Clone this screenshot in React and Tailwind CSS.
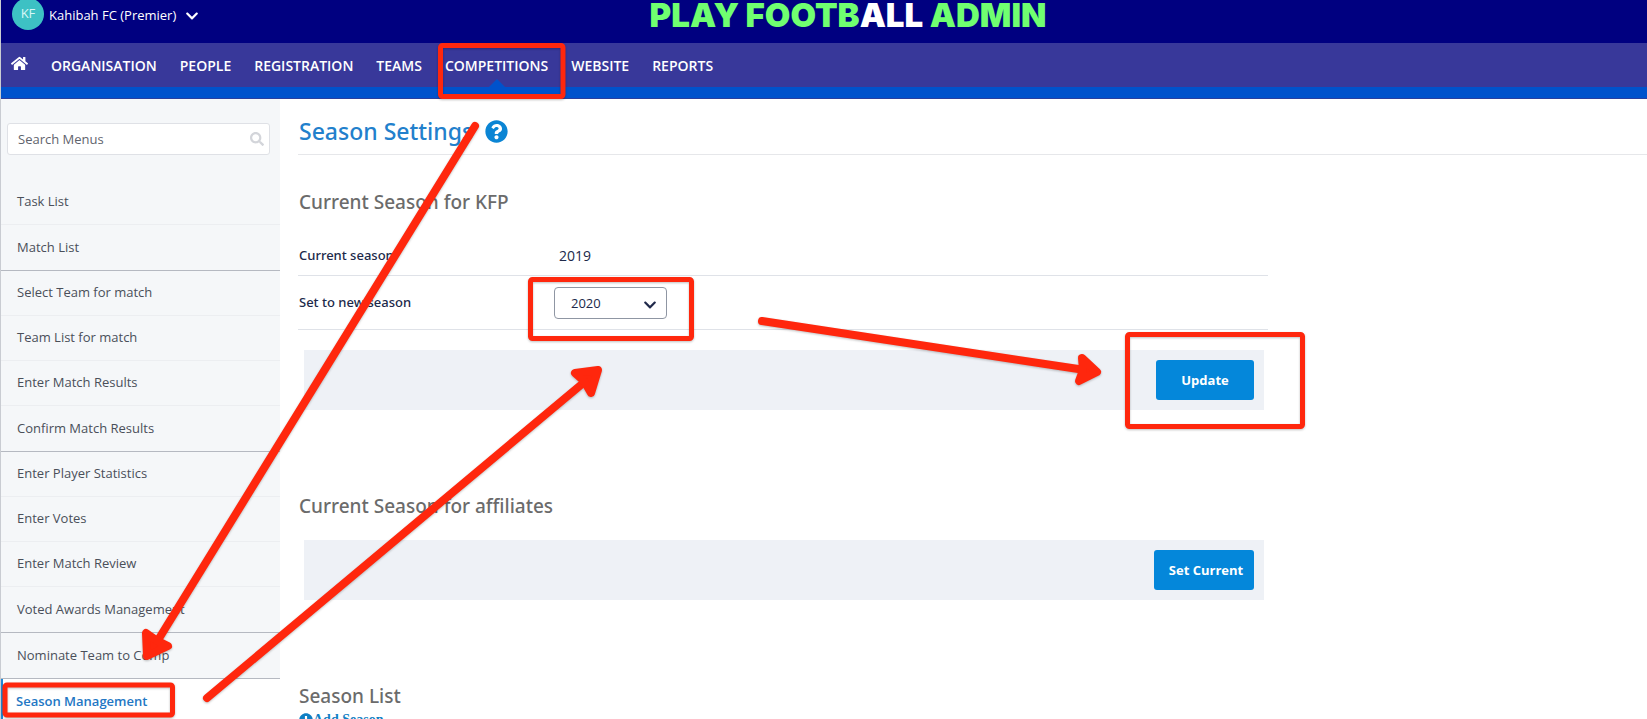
import { FaChevronDown, FaHome, FaPlusCircle, FaQuestionCircle, FaSearch } from 'react-icons/fa';
import clsx from 'clsx';

const navItems = ['ORGANISATION', 'PEOPLE', 'REGISTRATION', 'TEAMS', 'COMPETITIONS', 'WEBSITE', 'REPORTS'];

const menuGroups = [
  ['Task List', 'Match List'],
  ['Select Team for match', 'Team List for match', 'Enter Match Results', 'Confirm Match Results'],
  ['Enter Player Statistics', 'Enter Votes', 'Enter Match Review', 'Voted Awards Management'],
  ['Nominate Team to Comp'],
];

const Header = () => (
  <header className="grid h-[43px] grid-cols-[1fr_auto_1fr] items-start bg-[#000080] text-white">
    <button type="button" className="flex h-8 items-center pl-[11px] text-left">
      <span className="-mt-1 flex size-8 items-center justify-center rounded-full bg-[#3dc1c4] text-[13px] text-[#d8f7f7]">
        KF
      </span>
      <span className="ml-[5px] text-[13px]">Kahibah FC (Premier)</span>
      <FaChevronDown className="ml-[9px] size-[14px]" />
    </button>
    <h1 className="pl-12 font-[Inter,sans-serif] text-[33px] leading-[30px] font-black text-[#70ff70]">
      PLAY FOOTB<span className="text-white">ALL</span> ADMIN
    </h1>
  </header>
);

const Nav = () => (
  <nav className="border-b border-[#2a3f9e] bg-[#38389a] text-white">
    <ul className="flex h-11 items-center gap-[23px] pl-[10px] text-sm font-semibold">
      <li>
        <a href="#home" aria-label="Home">
          <FaHome className="mb-1 size-[17px]" />
        </a>
      </li>
      {navItems.map((item) => (
        <li key={item} className="relative flex h-full items-center pt-0.5">
          <a href={`#${item.toLowerCase()}`}>{item}</a>
          {item === 'COMPETITIONS' && (
            <svg className="absolute bottom-0 left-1/2 h-2 w-4 -translate-x-1/2" viewBox="0 0 16 8">
              <path d="M0 8L8 0L16 8Z" fill="#0052cc" />
            </svg>
          )}
        </li>
      ))}
    </ul>
    <div className="h-[11px] bg-[#0052cc]" />
  </nav>
);

const Sidebar = () => (
  <aside className="w-[279px] shrink-0 bg-[#f5f7f9] pt-6 text-[13px] text-[#4a4f59]">
    <form className="mr-[10px] mb-[25px] ml-[6px] flex h-8 items-center rounded-[3px] border border-[#dfe1e6] bg-white px-[10px]">
      <input
        type="text"
        aria-label="Search Menus"
        placeholder="Search Menus"
        className="min-w-0 flex-1 pt-0.5 outline-none placeholder:text-[#5f646d]"
      />
      <button type="submit" aria-label="Search" className="-mr-[5px]">
        <FaSearch className="size-[14px] text-[#d3d5da]" />
      </button>
    </form>
    {menuGroups.map((group) => (
      <ul key={group[0]} className="border-b border-[#b5b9c1]">
        {group.map((label, index) => (
          <li key={label} className={clsx('h-[45px]', index < group.length - 1 && 'border-b border-[#eceef1]')}>
            <a href="#menu" className="flex h-full items-center pl-4">
              {label}
            </a>
          </li>
        ))}
      </ul>
    ))}
    <a
      href="#season"
      aria-current="page"
      className="flex h-[46px] items-center border-l-2 border-[#1e88d6] bg-white pl-[13px] font-semibold text-[#2377c4]"
    >
      Season Management
    </a>
  </aside>
);

const SectionTitle = ({ children }) => (
  <h3 className="pl-px font-['Noto_Sans',sans-serif] text-[19px] leading-8 font-medium text-[#6b6b6b]">{children}</h3>
);

const ActionBar = ({ children }) => (
  <div className="mr-1 ml-[6px] flex h-[60px] items-center justify-end bg-[#eef1f6] pr-[10px]">{children}</div>
);

const SeasonSettings = () => (
  <main className="min-w-0 flex-1 pl-[18px]">
    <div className="flex h-14 items-center border-b border-[#e6e7ea] pt-[10px] pl-px">
      <h2 className="font-['Noto_Sans',sans-serif] text-[23px] font-medium text-[#2280cc]">Season Settings</h2>
      <a href="#help" aria-label="Help" className="ml-3">
        <FaQuestionCircle className="size-[23px] text-[#0b85d4]" />
      </a>
    </div>
    <div className="max-w-[970px] pt-[31px]">
      <SectionTitle>Current Season for KFP</SectionTitle>
      <form className="mb-20" onSubmit={(event) => event.preventDefault()}>
        <div className="mt-[18px] flex h-10 items-center border-b border-[#dfe2e8] pl-px text-[#20294a]">
          <span className="w-[260px] font-['Noto_Sans',sans-serif] text-[13px] font-medium">Current season</span>
          <span className="text-sm">2019</span>
        </div>
        <div className="mb-5 flex h-[54px] items-center border-b border-[#dfe2e8] pl-px text-[13px] text-[#20294a]">
          <label htmlFor="season" className="w-[255px] font-['Noto_Sans',sans-serif] font-medium">
            Set to new season
          </label>
          <div className="relative">
            <select
              id="season"
              defaultValue="2020"
              className="h-8 w-[113px] appearance-none rounded-[4px] border border-[#8f96a3] bg-white pt-0.5 pl-4"
            >
              <option>2019</option>
              <option>2020</option>
            </select>
            <FaChevronDown className="pointer-events-none absolute top-[11px] right-[10px] size-[14px]" />
          </div>
        </div>
        <ActionBar>
          <button
            type="submit"
            className="h-10 w-[98px] rounded-[3px] bg-[#0487da] pt-0.5 text-[13px] font-bold text-white"
          >
            Update
          </button>
        </ActionBar>
      </form>
      <SectionTitle>Current Season for affiliates</SectionTitle>
      <div className="mt-[18px] mb-20">
        <ActionBar>
          <button
            type="button"
            className="h-10 w-[100px] rounded-[3px] bg-[#0487da] pt-0.5 pl-1 text-[13px] font-bold text-white"
          >
            Set Current
          </button>
        </ActionBar>
      </div>
      <SectionTitle>Season List</SectionTitle>
      <a
        href="#add"
        className="flex items-center pl-px font-['Liberation_Serif',serif] text-sm leading-4 font-bold text-[#0f7fc4]"
      >
        <FaPlusCircle className="size-[14px]" />
        Add Season
      </a>
    </div>
  </main>
);

// Red call-outs that walk through the steps
const Annotations = () => (
  <svg
    className="pointer-events-none absolute inset-y-0 -left-px h-full w-full drop-shadow-[0_1px_1px_rgba(0,0,0,0.25)]"
    fill="none"
    stroke="#ff270d"
    strokeWidth="5"
    strokeLinejoin="round"
    strokeLinecap="round"
  >
    <rect x="440.5" y="45.5" width="122.5" height="51" rx="2" />
    <rect x="530.5" y="279.5" width="161" height="59" rx="2" />
    <rect x="1127.5" y="334.5" width="175" height="92" rx="2" />
    <rect x="5" y="685" width="167.5" height="30" rx="2" />
    <g strokeWidth="8">
      <path d="M475 126L155 645" />
      <path d="M146 633L147 656L168 646L156 640Z" fill="#ff270d" />
      <path d="M207 698L588 379" />
      <path d="M575 373L598 370L591 393L584 381Z" fill="#ff270d" />
      <path d="M762 321L1085 370" />
      <path d="M1082 358L1097 372L1079 381L1083 370Z" fill="#ff270d" />
    </g>
  </svg>
);

const App = () => (
  <div className="relative h-screen overflow-hidden border-l border-[#c9ccd2] bg-white font-['Open_Sans',sans-serif]">
    <Header />
    <Nav />
    <div className="flex">
      <Sidebar />
      <SeasonSettings />
    </div>
    <Annotations />
  </div>
);

export default App;
